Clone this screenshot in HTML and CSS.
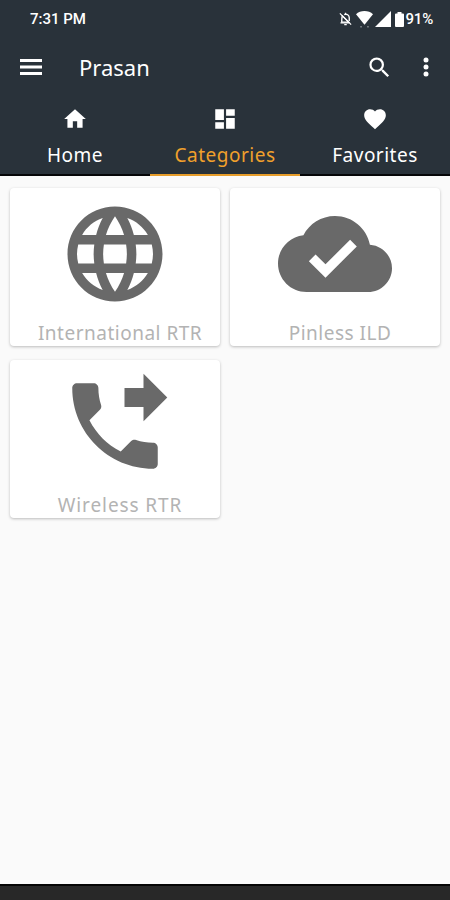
FILE: index.html
```
<!DOCTYPE html>
<html lang="en">
<head>
    <meta charset="UTF-8">
    <meta name="viewport" content="width=device-width, initial-scale=1">
    <title>Prasan</title>
    <link rel="stylesheet" href="styles.css">
</head>
<body>
    <header class="header">
        <div class="status-bar">
            <span class="time">7:31 PM</span>
            <div class="status-icons">
                <svg class="bell" viewBox="0 0 24 24"><path d="M6 17h11L7 7c-1 2-1 4-1 10zM10 5c4-2 8 1 8 5v5" fill="none" stroke="currentColor" stroke-width="2.2"/><path d="M3 3l18 18M4 18h15M10 21h4M12 2v3" fill="none" stroke="currentColor" stroke-width="2"/></svg>
                <svg class="wifi" viewBox="0 0 16 16"><path d="M0 3C4-1 12-1 16 3L8 13z"/><path d="M4 14h1.500v1.500H4zM10.500 14H12v1.500h-1.500z" opacity=".4"/></svg>
                <svg class="signal" viewBox="0 0 16 16"><path d="M0 16L16 0v16z"/></svg>
                <svg class="battery" viewBox="0 0 9 15"><path d="M2.500 0h4v1.500H8a1 1 0 0 1 1 1V14a1 1 0 0 1-1 1H1a1 1 0 0 1-1-1V2.500a1 1 0 0 1 1-1h1.500z"/></svg>
                <span class="percent">91%</span>
            </div>
        </div>
        <div class="toolbar">
            <svg class="menu-icon" viewBox="0 0 22 16"><path d="M0 0h22v3H0zM0 6.500h22v3H0zM0 13h22v3H0z"/></svg>
            <h1 class="title">Prasan</h1>
            <svg class="search-icon" viewBox="0 0 24 24"><path d="M15.500 14h-.79l-.28-.27A6.470 6.470 0 0 0 16 9.500 6.500 6.500 0 1 0 9.500 16c1.610 0 3.090-.59 4.230-1.570l.27.28v.79l5 4.990L20.490 19l-4.990-5zm-6 0C7.010 14 5 11.990 5 9.500S7.010 5 9.500 5 14 7.010 14 9.500 11.990 14 9.500 14z"/></svg>
            <svg class="more-icon" viewBox="0 0 6 20"><circle cx="3" cy="3" r="2.500"/><circle cx="3" cy="10" r="2.500"/><circle cx="3" cy="17" r="2.500"/></svg>
        </div>
        <nav class="tabs">
            <a class="tab">
                <svg viewBox="0 0 24 24"><path d="M10 20v-6h4v6h5v-8h3L12 3 2 12h3v8z"/></svg>
                <span>Home</span>
            </a>
            <a class="tab active">
                <svg viewBox="0 0 24 24"><path d="M3 13h8V3H3v10zm0 8h8v-6H3v6zm10 0h8V11h-8v10zm0-18v6h8V3h-8z"/></svg>
                <span>Categories</span>
            </a>
            <a class="tab">
                <svg viewBox="0 0 24 24"><path d="M12 21.350l-1.450-1.320C5.400 15.360 2 12.280 2 8.500 2 5.420 4.420 3 7.500 3c1.740 0 3.410.81 4.500 2.090C13.090 3.810 14.760 3 16.500 3 19.580 3 22 5.420 22 8.500c0 3.780-3.400 6.860-8.550 11.540L12 21.350z"/></svg>
                <span>Favorites</span>
            </a>
        </nav>
    </header>

    <main class="cards">
        <div class="card">
            <svg viewBox="0 0 24 24"><path d="M11.990 2C6.470 2 2 6.480 2 12s4.470 10 9.990 10C17.520 22 22 17.520 22 12S17.520 2 11.990 2zm6.930 6h-2.950c-.32-1.250-.78-2.450-1.380-3.560 1.840.63 3.370 1.910 4.330 3.560zM12 4.040c.83 1.200 1.480 2.530 1.910 3.960h-3.820c.43-1.430 1.080-2.760 1.910-3.960zM4.260 14C4.100 13.360 4 12.690 4 12s.1-1.360.26-2h3.380c-.08.66-.14 1.320-.14 2s.06 1.340.14 2H4.260zm.82 2h2.950c.32 1.250.78 2.450 1.380 3.560-1.840-.63-3.370-1.900-4.330-3.560zm2.950-8H5.080c.96-1.660 2.490-2.930 4.330-3.560C8.810 5.550 8.350 6.750 8.030 8zM12 19.960c-.83-1.200-1.480-2.530-1.910-3.960h3.820c-.43 1.430-1.080 2.760-1.910 3.960zM14.340 14H9.660c-.09-.66-.16-1.320-.16-2s.07-1.350.16-2h4.680c.09.65.16 1.320.16 2s-.07 1.340-.16 2zm.25 5.560c.6-1.110 1.060-2.310 1.380-3.560h2.950c-.96 1.650-2.490 2.930-4.330 3.560zM16.360 14c.08-.66.14-1.320.14-2s-.06-1.340-.14-2h3.380c.16.64.26 1.310.26 2s-.1 1.360-.26 2h-3.380z"/></svg>
            <span>International RTR</span>
        </div>
        <div class="card">
            <svg viewBox="0 0 24 24"><path d="M19.350 10.040C18.670 6.590 15.640 4 12 4 9.110 4 6.600 5.640 5.350 8.040 2.340 8.360 0 10.910 0 14c0 3.310 2.690 6 6 6h13c2.760 0 5-2.240 5-5 0-2.640-2.050-4.780-4.650-4.960zM10 17l-3.500-3.500 1.410-1.410L10 14.170 15.180 9l1.410 1.410L10 17z"/></svg>
            <span>Pinless ILD</span>
        </div>
        <div class="card">
            <svg viewBox="0 0 24 24"><path d="M18 11l5-5-5-5v3h-4v4h4v3zm2 4.500c-1.250 0-2.450-.2-3.570-.57-.35-.11-.74-.03-1.020.24l-2.200 2.200c-2.830-1.440-5.150-3.750-6.590-6.590l2.200-2.210c.28-.26.36-.65.25-1C8.700 6.450 8.500 5.250 8.500 4c0-.55-.45-1-1-1H4c-.55 0-1 .45-1 1 0 9.390 7.610 17 17 17 .55 0 1-.45 1-1v-3.500c0-.55-.45-1-1-1z"/></svg>
            <span class="wide">Wireless RTR</span>
        </div>
    </main>

    <footer class="nav-bar"></footer>
</body>
</html>
```
FILE: styles.css
```
* { box-sizing: border-box; }
body {
    margin: 0;
    height: 900px;
    display: flex;
    flex-direction: column;
    background: #fafafa;
    font-family: "Noto Sans", sans-serif;
    overflow: hidden;
}
svg { display: block; fill: currentColor; flex: none; }

/* header */
.header {
    height: 176px;
    background: #29323a;
    color: #fff;
}
.status-bar {
    height: 38px;
    padding: 0 17px 0 30px;
    display: flex;
    align-items: center;
    justify-content: space-between;
    font-family: Roboto, sans-serif;
    font-size: 15px;
    font-weight: 500;
}
.status-icons { display: flex; align-items: center; }
.bell { width: 15px; height: 16px; margin-right: 3px; }
.wifi { width: 17px; height: 17px; margin-right: 2px; }
.signal { width: 16px; height: 16px; margin-right: 4px; }
.battery { width: 9px; height: 15px; margin-right: 2px; }
.percent { letter-spacing: -0.2px; }
.toolbar {
    height: 58px;
    padding: 0 21px 0 20px;
    display: flex;
    align-items: center;
}
.menu-icon { width: 22px; height: 16px; }
.title {
    margin: 0 auto 0 37px;
    font-size: 22px;
    font-weight: 400;
    line-height: 30px;
}
.search-icon { width: 27px; height: 27px; margin-right: 30px; }
.more-icon { width: 6px; height: 20px; }
.tabs { display: flex; height: 80px; }
.tab {
    flex: 1;
    display: flex;
    flex-direction: column;
    align-items: center;
    padding-top: 10px;
    border-bottom: 2px solid #050608;
    font-size: 19px;
    line-height: 26px;
    letter-spacing: 0.5px;
}
.tab svg { width: 26px; height: 26px; margin-bottom: 10px; }
.tab.active { border-color: #e79d2b; }
.tab.active span { color: #f0a02c; }

/* categories */
.cards {
    flex: 1;
    display: grid;
    grid-template-columns: 210px 210px;
    grid-auto-rows: 158px;
    gap: 14px 10px;
    align-content: start;
    padding: 12px 10px;
}
.card {
    display: flex;
    flex-direction: column;
    align-items: center;
    padding-top: 9px;
    border-radius: 4px;
    background: #fff;
    box-shadow: 0 1px 3px rgba(0, 0, 0, 0.25);
    color: #696969;
}
.card svg { width: 114px; height: 114px; }
.card span {
    margin: 9px 0 0 10px;
    color: #b3b3b3;
    font-size: 19px;
    line-height: 26px;
    letter-spacing: 0.5px;
    white-space: nowrap;
}
.card .wide { letter-spacing: 0.9px; }

.nav-bar {
    height: 16px;
    background: #282828;
    border-top: 2px solid #050505;
}
```
